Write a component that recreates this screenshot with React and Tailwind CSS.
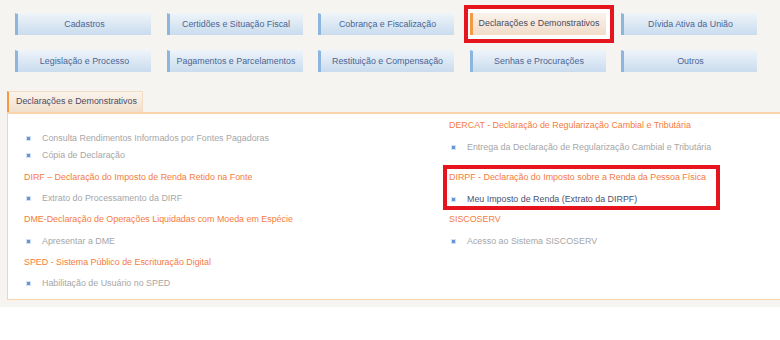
import React from "react";

const rows = [
  ["Cadastros", "Certidões e Situação Fiscal", "Cobrança e Fiscalização", "Declarações e Demonstrativos", "Dívida Ativa da União"],
  ["Legislação e Processo", "Pagamentos e Parcelamentos", "Restituição e Compensação", "Senhas e Procurações", "Outros"],
];

function NavButton({ label, active }) {
  if (active) {
    return (
      <div className="relative h-[22px]">
        <div className="absolute left-[-6px] right-[-8px] top-[-8px] bottom-[-8px] border-4 border-[#e5141d] bg-white" />
        <div className="relative z-10 flex h-[22px] items-center justify-center border-l-[3px] border-[#f49a45] bg-gradient-to-b from-[#faf3ec] to-[#f0dcc9] text-[#4b4a5e]">
          {label}
        </div>
      </div>
    );
  }
  return (
    <div className="flex h-[22px] items-center justify-center border-l-[3px] border-t border-[#8db6de] border-t-[#eef4fa] bg-gradient-to-b from-[#edf3f9] to-[#c9dcee] text-[#4a6594]">
      {label}
    </div>
  );
}

function Heading({ children, mt }) {
  return (
    <div className="h-[14px] leading-[14px] text-[#f47b3e]" style={{ marginTop: mt }}>
      {children}
    </div>
  );
}

function Link({ children, mt, dark }) {
  return (
    <div className="flex h-[14px] items-center leading-[14px]" style={{ marginTop: mt }}>
      <div className="ml-[2px] h-[5px] w-[5px] border border-[#d3e1f3] bg-[#6495d8]" />
      <span className={"ml-[11px] " + (dark ? "text-[#4a5272]" : "text-[#a6a6a6]")}>{children}</span>
    </div>
  );
}

export default function App() {
  return (
    <div className="w-[780px] overflow-hidden bg-white text-[8.9px]" style={{ fontFamily: '"Liberation Sans", Arial, sans-serif' }}>
      <div className="bg-[#f5f4f0] pb-[7px]">
        <div className="grid grid-cols-[repeat(5,136px)] gap-x-[15.5px] gap-y-[15px] pl-[15px] pt-[13px]">
          {rows.flat().map((l) => (
            <NavButton key={l} label={l} active={l === "Declarações e Demonstrativos"} />
          ))}
        </div>
        <div className="ml-[7px] mt-[19px] flex h-[21px] w-[136px] items-center border-l-2 border-t border-r border-[#f3dcc4] border-l-[#f49a45] bg-gradient-to-b from-[#faf4ec] to-[#f1dfcc] pl-[7px] text-[#4b4a63]">
          Declarações e Demonstrativos
        </div>
        <div className="ml-[7px] mr-[-20px] flex border border-t-2 border-[#fbd2a9] bg-white pb-[9px] pl-[16px]">
          <div className="w-[425px]">
            <Link mt={17}>Consulta Rendimentos Informados por Fontes Pagadoras</Link>
            <Link mt={3}>Cópia de Declaração</Link>
            <Heading mt={8}>DIRF – Declaração do Imposto de Renda Retido na Fonte</Heading>
            <Link mt={7}>Extrato do Processamento da DIRF</Link>
            <Heading mt={7}>DME-Declaração de Operações Liquidadas com Moeda em Espécie</Heading>
            <Link mt={8}>Apresentar a DME</Link>
            <Heading mt={7}>SPED - Sistema Público de Escrituração Digital</Heading>
            <Link mt={7}>Habilitação de Usuário no SPED</Link>
          </div>
          <div>
            <Heading mt={4}>DERCAT - Declaração de Regularização Cambial e Tributária</Heading>
            <Link mt={8}>Entrega da Declaração de Regularização Cambial e Tributária</Link>
            <div className="relative mt-[16px]">
              <div className="pointer-events-none absolute left-[-6px] top-[-5px] bottom-[-4px] w-[277px] border-4 border-[#e5141d]" />
              <Heading mt={0}>DIRPF - Declaração do Imposto sobre a Renda da Pessoa Física</Heading>
              <Link mt={8} dark>Meu Imposto de Renda (Extrato da DIRPF)</Link>
            </div>
            <Heading mt={6}>SISCOSERV</Heading>
            <Link mt={8}>Acesso ao Sistema SISCOSERV</Link>
          </div>
        </div>
      </div>
    </div>
  );
}
